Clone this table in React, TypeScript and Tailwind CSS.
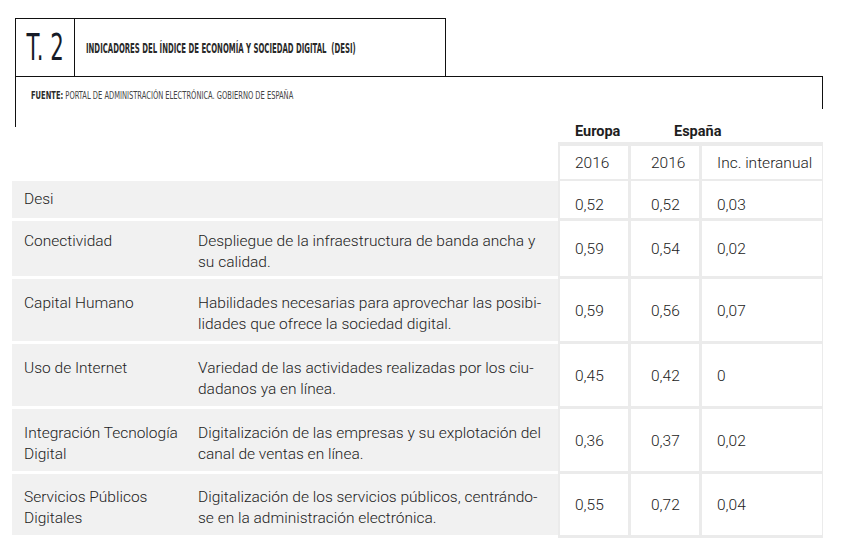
import React from "react";

type Row = {
  name: string[];
  desc: string[];
  eu: string;
  es: string;
  inc: string;
  h: string;
};

const rows: Row[] = [
  { name: ["Desi"], desc: [], eu: "0,52", es: "0,52", inc: "0,03", h: "h-[37px]" },
  {
    name: ["Conectividad"],
    desc: ["Despliegue de la infraestructura de banda ancha y", "su calidad."],
    eu: "0,59",
    es: "0,54",
    inc: "0,02",
    h: "h-[55px]",
  },
  {
    name: ["Capital Humano"],
    desc: ["Habilidades necesarias para aprovechar las posibi-", "lidades que ofrece la sociedad digital."],
    eu: "0,59",
    es: "0,56",
    inc: "0,07",
    h: "h-[62px]",
  },
  {
    name: ["Uso de Internet"],
    desc: ["Variedad de las actividades realizadas por los ciu-", "dadanos ya en línea."],
    eu: "0,45",
    es: "0,42",
    inc: "0",
    h: "h-[62px]",
  },
  {
    name: ["Integración Tecnología", "Digital"],
    desc: ["Digitalización de las empresas y su explotación del", "canal de ventas en línea."],
    eu: "0,36",
    es: "0,37",
    inc: "0,02",
    h: "h-[62px]",
  },
  {
    name: ["Servicios Públicos", "Digitales"],
    desc: ["Digitalización de los servicios públicos, centrándo-", "se en la administración electrónica."],
    eu: "0,55",
    es: "0,72",
    inc: "0,04",
    h: "h-[61px]",
  },
];

const narrow = "font-['Liberation_Sans_Narrow','DejaVu_Sans_Condensed','Liberation_Sans',sans-serif]";

function Lines({ lines }: { lines: string[] }) {
  return (
    <div className="whitespace-nowrap">
      {lines.map((l, i) => (
        <div key={i}>{l}</div>
      ))}
    </div>
  );
}

export default function App() {
  return (
    <div className="w-[845px] h-[546px] bg-white overflow-hidden font-['Roboto',sans-serif] font-light text-[15.5px] leading-[21px] text-[#222]">
      {/* title block */}
      <div className="pt-[18px] pl-[15px]">
        <div className="flex w-[431px] h-[58px] border border-b-0 border-[#111]">
          <div className="w-[60px] border-r border-[#111] flex items-center justify-center">
            <span className={`${narrow} inline-block text-[37px] leading-none text-[#161b27] scale-x-[0.64] whitespace-nowrap`}>
              T. 2
            </span>
          </div>
          <div className="flex items-center pl-[11px]">
            <span
              className={`${narrow} inline-block font-bold text-[14px] leading-none text-[#2a2a2a] scale-x-[0.55] origin-left whitespace-nowrap`}
            >
              INDICADORES DEL ÍNDICE DE ECONOMÍA Y SOCIEDAD DIGITAL&nbsp; (DESI)
            </span>
          </div>
        </div>
        <div className="flex w-[808px] border-t border-[#111]">
          <div className="flex-1 h-[50px] border-l border-[#111] pl-[15px] pt-[13px] flex items-start">
            <span
              className={`${narrow} block text-[11px] leading-none font-normal text-[#444] scale-x-[0.68] origin-left whitespace-nowrap`}
            >
              <b className="text-[#2a2a2a]">FUENTE:</b> PORTAL DE ADMINISTRACIÓN ELECTRÓNICA. GOBIERNO DE ESPAÑA
            </span>
          </div>
          <div className="w-px h-[32px] bg-[#111]" />
        </div>
      </div>

      {/* table */}
      <div className="ml-[12px] w-[811px] -mt-[7px]">
        <div className="flex h-[22px] items-center font-bold text-[14.5px] text-[#1e1e1e]">
          <div className="w-[548px]" />
          <div className="w-[86px] pl-[15px]">Europa</div>
          <div className="pl-[28px]">España</div>
        </div>

        <div className="flex">
          <div className="w-[546px]" />
          <div className="w-[265px] bg-[#ebebeb] pt-[4px] pb-[2px] pl-[2px] pr-[1px] grid grid-cols-[68px_68px_120px] gap-x-[3px]">
            <div className="bg-white h-[33px] flex items-center pl-[15px] pt-[1px]">2016</div>
            <div className="bg-white h-[33px] flex items-center pl-[20px] pt-[1px]">2016</div>
            <div className="bg-white h-[33px] flex items-center pl-[15px] pt-[1px]">Inc. interanual</div>
          </div>
        </div>

        {rows.map((r, i) => (
          <div key={i} className="flex">
            <div className="w-[546px] pb-[3px]">
              <div className={`${r.h} bg-[#f1f1f1] flex items-center ${i === 0 ? "" : "pt-[7px]"}`}>
                <div className="flex items-start">
                  <div className="w-[186px] pl-[12px]">
                    <Lines lines={r.name} />
                  </div>
                  <Lines lines={r.desc} />
                </div>
              </div>
            </div>
            <div className="w-[265px] bg-[#ebebeb] pb-[3px] pl-[2px] pr-[1px] grid grid-cols-[68px_68px_120px] gap-x-[3px]">
              <div className={`${r.h} bg-white flex items-center pl-[15px] ${i === 0 ? "pt-[12px]" : "pt-[2px]"}`}>{r.eu}</div>
              <div className={`${r.h} bg-white flex items-center pl-[20px] ${i === 0 ? "pt-[12px]" : "pt-[2px]"}`}>{r.es}</div>
              <div className={`${r.h} bg-white flex items-center pl-[15px] ${i === 0 ? "pt-[12px]" : "pt-[2px]"}`}>{r.inc}</div>
            </div>
          </div>
        ))}
      </div>
    </div>
  );
}
